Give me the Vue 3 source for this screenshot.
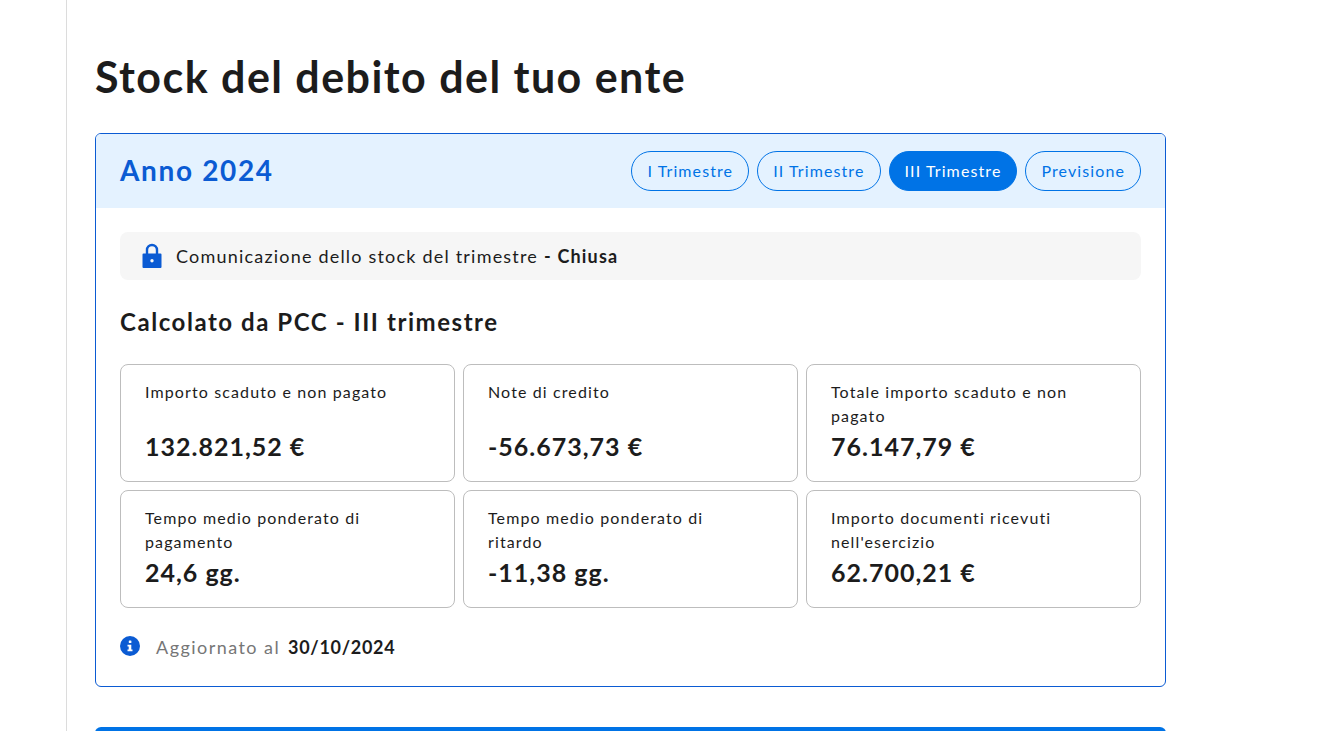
<script setup>
const pills = [
  { label: 'I Trimestre', active: false },
  { label: 'II Trimestre', active: false },
  { label: 'III Trimestre', active: true },
  { label: 'Previsione', active: false },
]
const stats = [
  { label: 'Importo scaduto e non pagato', value: '132.821,52 €' },
  { label: 'Note di credito', value: '-56.673,73 €' },
  { label: 'Totale importo scaduto e non pagato', value: '76.147,79 €' },
  { label: 'Tempo medio ponderato di pagamento', value: '24,6 gg.' },
  { label: 'Tempo medio ponderato di ritardo', value: '-11,38 gg.' },
  { label: "Importo documenti ricevuti nell'esercizio", value: '62.700,21 €' },
]
</script>

<template>
  <div class="page">
    <main class="main">
      <h1 class="title">Stock del debito del tuo ente</h1>
      <section class="card">
        <header class="head">
          <h2 class="year">Anno 2024</h2>
          <div class="pills">
            <button v-for="p in pills" :key="p.label" class="pill" :class="{ active: p.active }">{{ p.label }}</button>
          </div>
        </header>
        <div class="body">
          <div class="notice">
            <svg class="lock" viewBox="0 0 20 26" width="20" height="26" aria-hidden="true">
              <path fill="none" stroke="#0b5bd3" stroke-width="2.4" d="M5 12V7a5 5 0 0 1 10 0v5" />
              <path fill="#0b5bd3" fill-rule="evenodd" d="M1.5 10.500h17a1 1 0 0 1 1 1v12.500a1 1 0 0 1-1 1h-17a1 1 0 0 1-1-1V11.500a1 1 0 0 1 1-1zM10 16a1.700 1.700 0 1 0 0 3.400 1.700 1.700 0 0 0 0-3.400z" />
            </svg>
            <span>Comunicazione dello stock del trimestre <b>- Chiusa</b></span>
          </div>
          <h3 class="sub">Calcolato da PCC - III trimestre</h3>
          <div class="grid">
            <div v-for="s in stats" :key="s.label" class="stat">
              <p class="label">{{ s.label }}</p>
              <p class="value">{{ s.value }}</p>
            </div>
          </div>
          <div class="foot">
            <svg class="info" viewBox="0 0 20 20" width="20" height="20" aria-hidden="true">
              <circle cx="10" cy="10" r="10" fill="#0b5bd3" />
              <rect x="8.800" y="4.500" width="2.600" height="2.600" rx="0.6" fill="#fff" />
              <path fill="#fff" d="M7.500 8.800h3.800v4.700h1.200v1.700h-5v-1.700h1.200v-3H7.500z" />
            </svg>
            <span class="muted">Aggiornato al</span>
            <b class="date">30/10/2024</b>
          </div>
        </div>
      </section>
      <div class="next"></div>
    </main>
  </div>
</template>

<style>
html, body { margin: 0; height: 100%; overflow: hidden; background: #fff; }
</style>

<style scoped>
.page {
  height: 731px;
  overflow: hidden;
  padding-left: 66px;
  font-family: Lato, "Open Sans", sans-serif;
  color: #1c1c1c;
}
.main {
  height: 731px;
  width: 1071px;
  padding-left: 28px;
  border-left: 1px solid #dcdcdc;
}
.title {
  margin: 0 0 29px;
  padding-top: 50px;
  font-size: 43px;
  line-height: 54px;
  font-weight: 700;
  letter-spacing: 1.45px;
}
.card {
  box-sizing: border-box;
  height: 554px;
  border: 1px solid #0b5bd3;
  border-radius: 6px;
  overflow: hidden;
}
.head {
  height: 74px;
  background: #e4f2ff;
  display: flex;
  align-items: center;
  justify-content: space-between;
  padding: 0 24px;
}
.year {
  margin: 0 0 2px;
  font-size: 28px;
  font-weight: 700;
  color: #0b5bd3;
  letter-spacing: 1.65px;
}
.pills { display: flex; gap: 8px; }
.pill {
  height: 40px;
  padding: 0 15px 2px;
  border: 1px solid #0073e6;
  border-radius: 20px;
  background: transparent;
  color: #0073e6;
  font-family: inherit;
  font-size: 16px;
  letter-spacing: 1.1px;
}
.pill.active { background: #0073e6; color: #fff; }
.body { padding: 24px 24px 0; }
.notice {
  height: 48px;
  display: flex;
  align-items: center;
  gap: 14px;
  padding-left: 22px;
  border-radius: 8px;
  background: #f6f6f6;
  font-size: 18px;
  letter-spacing: 1.2px;
}
.lock { flex: none; }
.sub {
  margin: 0;
  padding-top: 26px;
  height: 84px;
  box-sizing: border-box;
  font-size: 24px;
  line-height: 32px;
  font-weight: 700;
  letter-spacing: 1.55px;
}
.grid {
  display: grid;
  grid-template-columns: repeat(3, 335px);
  grid-auto-rows: 118px;
  gap: 8px;
}
.stat {
  box-sizing: border-box;
  border: 1px solid #bdbdbd;
  border-radius: 8px;
  padding: 15px 24px;
  display: flex;
  flex-direction: column;
}
.label {
  margin: 0;
  height: 50px;
  max-width: 250px;
  font-size: 16px;
  line-height: 24px;
  letter-spacing: 1.12px;
}
.stat:nth-child(3) .label, .stat:nth-child(6) .label { max-width: 270px; }
.value {
  margin: 0;
  font-size: 25px;
  line-height: 32px;
  font-weight: 700;
  letter-spacing: 1px;
}
.foot {
  margin-top: 28px;
  display: flex;
  align-items: center;
  font-size: 18px;
}
.info { flex: none; margin-right: 16px; margin-top: -2px; }
.muted { color: #767676; margin-right: 8px; letter-spacing: 1.45px; }
.date { font-weight: 700; letter-spacing: 0.7px; }
.next {
  margin-top: 40px;
  height: 60px;
  background: #0073e6;
  border-radius: 6px 6px 0 0;
}
</style>
